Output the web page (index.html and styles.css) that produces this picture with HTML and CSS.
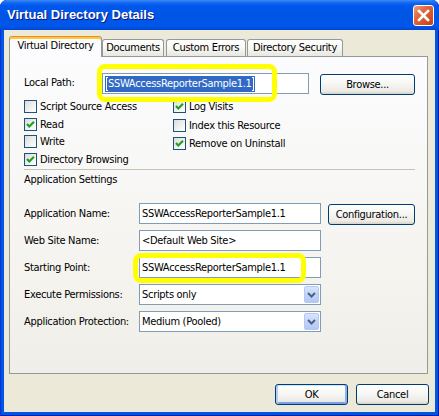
FILE: index.html
```html
<!DOCTYPE html>
<html>
<head>
<meta charset="utf-8">
<title>Virtual Directory Details</title>
<link rel="stylesheet" href="styles.css">
</head>
<body>
<div class="window">
  <div class="titlebar">
    <span class="title">Virtual Directory Details</span>
    <span class="close"><svg width="19" height="19" viewBox="0 0 19 19"><path d="M5 5 L14 14 M14 5 L5 14" stroke="#fff" stroke-width="2.6" stroke-linecap="square"/></svg></span>
  </div>
  <div class="client">
    <div class="tabs">
      <div class="tab active">Virtual Directory</div>
      <div class="tab t-docs">Documents</div>
      <div class="tab t-errors">Custom Errors</div>
      <div class="tab t-sec">Directory Security</div>
    </div>
    <div class="panel">
      <div class="path-row">
        <span class="lbl lbl-path">Local Path:</span>
        <div class="textbox path-box"><span class="sel">SSWAccessReporterSample1.1</span></div>
        <button class="btn browse">Browse...</button>
        <span class="mark mark-path"></span>
      </div>
      <div class="checks">
        <div class="col col-left">
          <div class="chk"><span class="box"></span>Script Source Access</div>
          <div class="chk"><span class="box"><svg width="11" height="11" viewBox="0 0 11 11"><polyline points="2,5 4.3,7.5 9,2.8" fill="none" stroke="#21A121" stroke-width="2.2"/></svg></span>Read</div>
          <div class="chk"><span class="box"></span>Write</div>
          <div class="chk"><span class="box"><svg width="11" height="11" viewBox="0 0 11 11"><polyline points="2,5 4.3,7.5 9,2.8" fill="none" stroke="#21A121" stroke-width="2.2"/></svg></span>Directory Browsing</div>
        </div>
        <div class="col col-right">
          <div class="chk"><span class="box"><svg width="11" height="11" viewBox="0 0 11 11"><polyline points="2,5 4.3,7.5 9,2.8" fill="none" stroke="#21A121" stroke-width="2.2"/></svg></span>Log Visits</div>
          <div class="chk"><span class="box"></span>Index this Resource</div>
          <div class="chk"><span class="box"><svg width="11" height="11" viewBox="0 0 11 11"><polyline points="2,5 4.3,7.5 9,2.8" fill="none" stroke="#21A121" stroke-width="2.2"/></svg></span>Remove on Uninstall</div>
        </div>
      </div>
      <div class="sep"></div>
      <div class="section-title">Application Settings</div>
      <div class="form">
        <div class="frow">
          <span class="lbl">Application Name:</span>
          <div class="textbox field">SSWAccessReporterSample1.1</div>
          <button class="btn config">Configuration...</button>
        </div>
        <div class="frow">
          <span class="lbl">Web Site Name:</span>
          <div class="textbox field">&lt;Default Web Site&gt;</div>
        </div>
        <div class="frow">
          <span class="lbl">Starting Point:</span>
          <div class="textbox field">SSWAccessReporterSample1.1</div>
          <span class="mark mark-start"></span>
        </div>
        <div class="frow">
          <span class="lbl">Execute Permissions:</span>
          <div class="textbox field select"><span class="val">Scripts only</span><span class="arrow"><svg width="13" height="15" viewBox="0 0 13 15"><polyline points="3,6 6.5,9.5 10,6" fill="none" stroke="#4D6185" stroke-width="2"/></svg></span></div>
        </div>
        <div class="frow">
          <span class="lbl">Application Protection:</span>
          <div class="textbox field select"><span class="val">Medium (Pooled)</span><span class="arrow"><svg width="13" height="15" viewBox="0 0 13 15"><polyline points="3,6 6.5,9.5 10,6" fill="none" stroke="#4D6185" stroke-width="2"/></svg></span></div>
        </div>
      </div>
    </div>
    <div class="actions">
      <button class="btn ok">OK</button>
      <button class="btn">Cancel</button>
    </div>
  </div>
</div>
</body>
</html>
```
FILE: styles.css
```css
html, body {
  margin: 0;
  padding: 0;
  background: #ffffff;
}
body {
  width: 439px;
  height: 416px;
  overflow: hidden;
  font-family: "DejaVu Sans Condensed", "DejaVu Sans", "Liberation Sans", sans-serif;
  font-stretch: condensed;
  font-size: 11px;
  letter-spacing: -0.3px;
  color: #000;
}
.window {
  width: 439px;
  height: 416px;
  display: flex;
  flex-direction: column;
  background: #0055E5;
  border-radius: 7px 7px 0 0;
  overflow: hidden;
  box-shadow: inset 1px 0 0 #0831D9, inset -1px 0 0 #001EA0, inset 0 -1px 0 #001EA0;
}
.titlebar {
  height: 30px;
  flex: none;
  display: flex;
  align-items: center;
  padding: 0 5px 0 7px;
  background: linear-gradient(#3C8CF8 0%, #1A6BF0 8%, #0058EE 18%, #0054E3 55%, #0058EB 85%, #0047D4 100%);
  border-radius: 7px 7px 0 0;
}
.title {
  flex: 1;
  color: #fff;
  font-family: "Liberation Sans", Arial, sans-serif;
  font-stretch: normal;
  font-weight: bold;
  font-size: 13px;
  letter-spacing: 0;
  line-height: 16px;
  text-shadow: 1px 1px 0 #0A1883;
}
.close {
  box-sizing: border-box;
  width: 21px;
  height: 21px;
  border: 1px solid #fff;
  border-radius: 3px;
  background: linear-gradient(135deg, #F0A080 0%, #E2693F 35%, #D4522A 70%, #C2401C 100%);
  display: flex;
  align-items: center;
  justify-content: center;
}
.client {
  flex: 1;
  margin: 0 4px 4px;
  background: #ECE9D8;
  padding: 6px 7px 0 5px;
  display: flex;
  flex-direction: column;
}
.tabs {
  height: 20px;
  display: flex;
  align-items: flex-end;
}
.tab {
  box-sizing: border-box;
  height: 17px;
  border: 1px solid #919B9C;
  border-bottom: none;
  border-radius: 3px 3px 0 0;
  background: linear-gradient(#FFFFFF, #F7F7F4 50%, #E8E7E0);
  text-align: center;
  line-height: 15px;
  white-space: nowrap;
}
.tab.active {
  width: 93px;
  height: 21px;
  margin-bottom: -1px;
  position: relative;
  z-index: 1;
  background: #FCFCFE;
  border-top: 1px solid #E68B2C;
  box-shadow: inset 0 2px 0 #FFC73C;
  padding-top: 2px;
  line-height: 14px;
}
.t-docs { width: 62px; }
.t-errors { width: 80px; margin-left: 2px; }
.t-sec { width: 96px; margin-left: 1px; }
.panel {
  box-sizing: border-box;
  height: 318px;
  border: 1px solid #919B9C;
  background: linear-gradient(#FCFCFE, #F4F3EE 70%, #EFEEE8);
  padding: 16px 12px 0 14px;
}
.path-row {
  position: relative;
  height: 22px;
  display: flex;
  align-items: flex-start;
}
.lbl {
  white-space: nowrap;
}
.lbl-path {
  width: 78px;
  line-height: 19px;
}
.textbox {
  box-sizing: border-box;
  height: 21px;
  border: 1px solid #7F9DB9;
  background: #fff;
  padding-left: 2px;
  line-height: 19px;
  white-space: nowrap;
  overflow: hidden;
}
.path-box {
  width: 207px;
  display: flex;
  align-items: center;
}
.sel {
  position: relative;
  background: #316AC5;
  color: #fff;
  height: 16px;
  line-height: 16px;
  padding: 0 3px;
}
.sel::before,
.sel::after {
  content: "";
  position: absolute;
  top: 1px;
  bottom: 1px;
  width: 1px;
  border: 1px solid #fff;
}
.sel::before { left: 1px; border-right: none; }
.sel::after { right: 1px; border-left: none; }
.btn {
  box-sizing: border-box;
  height: 21px;
  border: 1px solid #003C74;
  border-radius: 3px;
  background: linear-gradient(#FFFFFF, #F6F6F3 45%, #ECEBE6 85%, #D6D0C5);
  font: inherit;
  letter-spacing: inherit;
  color: #000;
  padding: 0;
  line-height: 19px;
  text-align: center;
}
.browse {
  width: 95px;
  margin-left: 11px;
  margin-top: 1px;
}
.mark {
  position: absolute;
  box-sizing: border-box;
  border: 5px solid #FFFF00;
  border-radius: 8px;
  pointer-events: none;
}
.mark-path {
  left: 73px;
  top: -9px;
  width: 180px;
  height: 38px;
}
.mark-start {
  left: 109px;
  top: -4px;
  width: 173px;
  height: 30px;
}
.checks {
  display: flex;
  margin-top: 5px;
}
.col {
  display: flex;
  flex-direction: column;
}
.col-left {
  width: 149px;
  gap: 4.7px;
}
.col-right {
  gap: 5.5px;
}
.chk {
  display: flex;
  align-items: center;
  gap: 3px;
  height: 13px;
  line-height: 13px;
  white-space: nowrap;
}
.box {
  box-sizing: border-box;
  width: 13px;
  height: 13px;
  flex: none;
  border: 1px solid #1C5180;
  background: linear-gradient(135deg, #DCDCD7, #F2F2EF 60%, #FFFFFF);
  display: flex;
}
.sep {
  height: 1px;
  background: #C6C3B6;
  margin-top: 3px;
}
.section-title {
  margin-top: 3px;
  line-height: 13px;
}
.form {
  margin-top: 17px;
  display: flex;
  flex-direction: column;
  gap: 6px;
}
.frow {
  position: relative;
  height: 21px;
  display: flex;
  align-items: flex-start;
}
.frow .lbl {
  width: 115px;
  line-height: 21px;
}
.field {
  width: 182px;
}
.config {
  width: 87px;
  margin-left: 7px;
  margin-top: 1px;
}
.select {
  display: flex;
  align-items: center;
  justify-content: space-between;
  padding: 0 1px 0 2px;
}
.arrow {
  box-sizing: border-box;
  width: 15px;
  height: 17px;
  border: 1px solid #B5C8F2;
  border-radius: 2px;
  background: linear-gradient(#D9E5FD, #C1D3FB 50%, #B4C8F6);
  display: flex;
  align-items: center;
  justify-content: center;
}
.actions {
  display: flex;
  justify-content: flex-end;
  gap: 8px;
  margin-top: 10px;
  margin-right: -1px;
}
.actions .btn {
  width: 73px;
}
.ok {
  box-shadow: inset 2px 0 0 #B6CDF4, inset -2px 0 0 #8DB2EC, inset 0 -2px 0 #7A9EE8, inset 0 1px 0 #CEE7FF;
}
```
